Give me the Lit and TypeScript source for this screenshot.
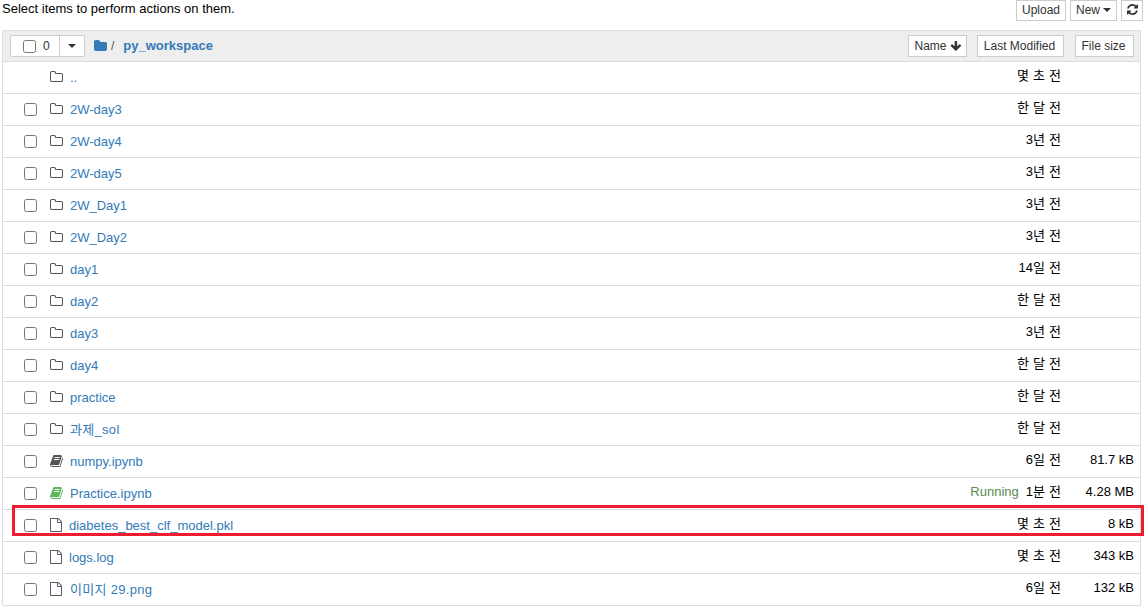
import { LitElement, html, css, svg } from "lit";
import { customElement } from "lit/decorators.js";

type Row = {
  name: string;
  kind: "up" | "folder" | "book" | "running" | "file";
  date: string;
  size?: string;
  status?: string;
  hangul?: boolean;
};

const rows: Row[] = [
  { name: "..", kind: "up", date: "몇 초 전" },
  { name: "2W-day3", kind: "folder", date: "한 달 전" },
  { name: "2W-day4", kind: "folder", date: "3년 전" },
  { name: "2W-day5", kind: "folder", date: "3년 전" },
  { name: "2W_Day1", kind: "folder", date: "3년 전" },
  { name: "2W_Day2", kind: "folder", date: "3년 전" },
  { name: "day1", kind: "folder", date: "14일 전" },
  { name: "day2", kind: "folder", date: "한 달 전" },
  { name: "day3", kind: "folder", date: "3년 전" },
  { name: "day4", kind: "folder", date: "한 달 전" },
  { name: "practice", kind: "folder", date: "한 달 전" },
  { name: "과제_sol", kind: "folder", date: "한 달 전", hangul: true },
  { name: "numpy.ipynb", kind: "book", date: "6일 전", size: "81.7 kB" },
  { name: "Practice.ipynb", kind: "running", date: "1분 전", size: "4.28 MB", status: "Running" },
  { name: "diabetes_best_clf_model.pkl", kind: "file", date: "몇 초 전", size: "8 kB" },
  { name: "logs.log", kind: "file", date: "몇 초 전", size: "343 kB" },
  { name: "이미지 29.png", kind: "file", date: "6일 전", size: "132 kB", hangul: true },
];

// font awesome 4 outlines, the list uses these glyphs
const folderOutline = svg`<path fill="#555" d="M1536 1312v-704q0-40-28-68t-68-28h-704q-40 0-68-28t-28-68v-64q0-40-28-68t-68-28h-320q-40 0-68 28t-28 68v960q0 40 28 68t68 28h1216q40 0 68-28t28-68zm128-704v704q0 92-66 158t-158 66h-1216q-92 0-158-66t-66-158v-960q0-92 66-158t158-66h320q92 0 158 66t66 158v32h672q92 0 158 66t66 158z"/>`;
const fileOutline = svg`<path fill="#5a5a6a" d="M1468 380q28 28 48 76t20 88v1152q0 40-28 68t-68 28h-1344q-40 0-68-28t-28-68v-1600q0-40 28-68t68-28h896q40 0 88 20t76 48zm-444-244v376h376q-10-29-22-41l-313-313q-12-12-41-22zm384 1528v-1024h-416q-40 0-68-28t-28-68v-416h-768v1536h1280z"/>`;
const bookShape = (fill: string) => svg`<path fill=${fill} d="M1639 478q40 57 18 129l-275 906q-19 64-76.500 107.500t-122.500 43.500h-923q-77 0-148.500-53.500t-99.500-131.500q-24-67-2-127 0-4 3-27t4-37q1-8-3-21.500t-3-19.500q2-11 8-21t16.500-23.500 16.500-23.500q23-38 45-91.500t30-91.500q3-10 .5-30t-.5-28q3-11 17-28t17-23q21-36 42-92t25-90q1-9-2.500-32t.5-28q4-13 22-30.500t22-22.500q19-26 42.500-84.500t27.500-96.500q1-8-3-25.500t-2-26.500q2-8 9-18t18-23 17-21q8-12 16.500-30.500t15-35 16-36 19.500-32 26.500-23.500 36-11.500 47.500 5.500l-1 3q38-9 51-9h761q74 0 114 56t18 130l-274 906q-36 119-71.500 153.500t-128.500 34.500h-869q-27 0-38 15-11 16-1 43 24 70 144 70h923q29 0 56-15.500t35-41.500l300-987q7-22 5-57 38 15 59 43zm-1064 2q-4 13 2 22.500t20 9.500h608q13 0 25.500-9.500t16.500-22.500l21-64q4-13-2-22.500t-20-9.500h-608q-13 0-25.500 9.500t-16.500 22.500zm-83 256q-4 13 2 22.500t20 9.500h608q13 0 25.500-9.500t16.500-22.500l21-64q4-13-2-22.500t-20-9.500h-608q-13 0-25.500 9.500t-16.500 22.500z"/>`;

@customElement("app-root")
export class AppRoot extends LitElement {
  static styles = css`
    :host {
      display: block;
      position: relative;
      width: 1147px;
      height: 610px;
      overflow: hidden;
      background: #fff;
      color: #000;
      font: 13px/18px "Liberation Sans", "Noto Sans CJK KR", sans-serif;
    }

    .toolbar {
      display: flex;
      align-items: flex-start;
      height: 30px;
      padding-left: 2px;
      padding-right: 4px;
    }

    .hint {
      flex: 1;
      font-size: 13px;
    }

    .btn {
      box-sizing: border-box;
      display: flex;
      align-items: center;
      justify-content: center;
      height: 21px;
      background: #fff;
      border: 1px solid #ccc;
      color: #333;
      font-size: 12px;
      white-space: nowrap;
    }

    .toolbar .btn {
      padding-bottom: 2px;
    }

    .upload {
      width: 50px;
      margin-right: 4px;
    }

    .new {
      width: 47px;
      margin-right: 4px;
      gap: 3px;
    }

    .refresh {
      width: 22px;
    }

    .caret {
      width: 0;
      height: 0;
      border-left: 4px solid transparent;
      border-right: 4px solid transparent;
      border-top: 4px solid #333;
    }

    .list {
      box-sizing: border-box;
      width: 1139px;
      margin-left: 2px;
      border: 1px solid #ddd;
      border-top: 0;
      border-radius: 2px;
    }

    .head {
      box-sizing: border-box;
      display: flex;
      align-items: center;
      height: 32px;
      margin: 0 -1px;
      padding-left: 8px;
      padding-right: 6px;
      background: #eee;
      border: 1px solid #ddd;
      border-radius: 2px 2px 0 0;
    }

    .select {
      box-sizing: border-box;
      display: flex;
      height: 22px;
      width: 75px;
      margin-left: -1px;
      background: #fff;
      border: 1px solid #ccc;
      border-radius: 2px;
    }

    .select-main {
      display: flex;
      flex: 1;
      align-items: center;
      padding-left: 12px;
      gap: 7px;
      color: #333;
      font-size: 12px;
    }

    .select-drop {
      display: flex;
      align-items: center;
      justify-content: center;
      width: 24px;
      border-left: 1px solid #ccc;
    }

    .crumbs {
      display: flex;
      flex: 1;
      align-items: center;
      margin-left: 9px;
      color: #337ab7;
      font-size: 13px;
    }

    .crumbs .slash {
      margin-left: 4px;
      color: #555;
      font-size: 12px;
    }

    .crumbs .dir {
      margin-left: 9px;
      font-weight: 700;
      font-size: 13px;
    }

    .sort {
      height: 22px;
      background: #fff;
    }

    .sort-name {
      width: 59px;
      gap: 3px;
    }

    .sort-mod {
      width: 87px;
      margin-left: 10px;
      padding-right: 2px;
    }

    .sort-size {
      width: 59px;
      margin-left: 11px;
      padding-right: 2px;
    }

    .row {
      box-sizing: border-box;
      display: flex;
      align-items: center;
      height: 32px;
      padding-left: 21px;
      padding-right: 6px;
      border-bottom: 1px solid #ddd;
    }

    .row:last-child {
      height: 31px;
      border-bottom: 0;
    }

    .check {
      box-sizing: border-box;
      width: 13px;
      height: 13px;
      border: 1px solid #767676;
      border-radius: 2.500px;
      background: #fff;
    }

    .no-check {
      width: 13px;
    }

    .icon-box {
      display: flex;
      flex: none;
      width: 14px;
      margin-left: 13px;
      margin-top: -2px;
    }

    .name {
      flex: 1;
      margin-left: 6px;
      color: #337ab7;
      font-size: 13px;
      white-space: nowrap;
    }

    .name.is-file {
      margin-left: 5px;
    }

    .name.hangul {
      margin-left: 6px;
      letter-spacing: 0.3px;
    }

    .status {
      margin-right: 7px;
      color: #5c8a50;
      font-size: 13px;
    }

    .date {
      width: 130px;
      text-align: right;
      white-space: nowrap;
      word-spacing: 0.500px;
      font-size: 13px;
      margin-top: -3px;
    }

    .size {
      width: 73px;
      text-align: right;
      white-space: nowrap;
      margin-top: -3px;
      font-size: 13px;
    }

    .highlight {
      position: absolute;
      box-sizing: border-box;
      left: 12px;
      top: 505px;
      width: 1132px;
      height: 31px;
      border: 3px solid #ee1c2e;
      pointer-events: none;
    }
  `;

  private _renderIcon(kind: Row["kind"]) {
    if (kind === "file") {
      return html`<svg width="12" height="14" viewBox="0 0 1536 1792">${fileOutline}</svg>`;
    }
    const shape =
      kind === "up" || kind === "folder"
        ? folderOutline
        : bookShape(kind === "running" ? "#5cb85c" : "#555");
    return html`<svg width="13" height="14" viewBox="0 0 1664 1792">${shape}</svg>`;
  }

  private _renderRow(row: Row) {
    const nameClass = [
      "name",
      row.kind === "file" ? "is-file" : "",
      row.hangul ? "hangul" : "",
    ].join(" ");
    return html`
      <div class="row">
        ${row.kind === "up"
          ? html`<span class="no-check"></span>`
          : html`<span class="check"></span>`}
        <span class="icon-box">${this._renderIcon(row.kind)}</span>
        <span class=${nameClass}>${row.name}</span>
        <span class="date"
          >${row.status
            ? html`<span class="status">${row.status}</span>`
            : ""}${row.date}</span
        >
        <span class="size">${row.size ?? ""}</span>
      </div>
    `;
  }

  render() {
    return html`
      <div class="toolbar">
        <div class="hint">Select items to perform actions on them.</div>
        <div class="btn upload">Upload</div>
        <div class="btn new">New <span class="caret"></span></div>
        <div class="btn refresh">
          <svg width="11" height="11" viewBox="0 0 1536 1536">
            <path
              fill="#333"
              d="M1511 928q0 5-1 7-64 268-268 434.500T764 1536q-146 0-282.500-55T238 1324l-129 129q-19 19-45 19t-45-19-19-45V960q0-26 19-45t45-19h448q26 0 45 19t19 45-19 45l-137 137q71 66 161 102t187 36q134 0 250-65t186-179q11-17 53-117 8-23 30-23h192q13 0 22.500 9.500t9.500 22.500zm25-800v448q0 26-19 45t-45 19h-448q-26 0-45-19t-19-45 19-45l138-138Q969 256 768 256q-134 0-250 65T332 500q-11 17-53 117-8 23-30 23H50q-13 0-22.500-9.500T18 608v-7q65-268 270-434.500T768 0q146 0 284 55.500T1297 212l130-129q19-19 45-19t45 19 19 45z"
            />
          </svg>
        </div>
      </div>

      <div class="list">
        <div class="head">
          <div class="select">
            <div class="select-main"><span class="check"></span>0</div>
            <div class="select-drop"><span class="caret"></span></div>
          </div>
          <div class="crumbs">
            <svg width="13" height="14" viewBox="0 0 1664 1792">
              <path
                fill="#337ab7"
                d="M1664 592v704q0 92-66 158t-158 66h-1216q-92 0-158-66t-66-158v-960q0-92 66-158t158-66h320q92 0 158 66t66 158v32h672q92 0 158 66t66 158z"
              />
            </svg>
            <span class="slash">/</span>
            <span class="dir">py_workspace</span>
          </div>
          <div class="btn sort sort-name">
            Name
            <svg width="11" height="12" viewBox="0 0 1675 1792">
              <path
                fill="#333"
                d="M1675 832q0 53-37 90l-651 652q-39 37-91 37-53 0-90-37l-651-652q-38-36-38-90 0-53 38-91l74-75q39-37 91-37 53 0 90 37l294 294v-704q0-52 38-90t90-38h128q52 0 90 38t38 90v704l294-294q37-37 90-37 52 0 91 37l75 75q37 39 37 91z"
              />
            </svg>
          </div>
          <div class="btn sort sort-mod">Last Modified</div>
          <div class="btn sort sort-size">File size</div>
        </div>
        ${rows.map((row) => this._renderRow(row))}
      </div>

      <div class="highlight"></div>
    `;
  }
}
